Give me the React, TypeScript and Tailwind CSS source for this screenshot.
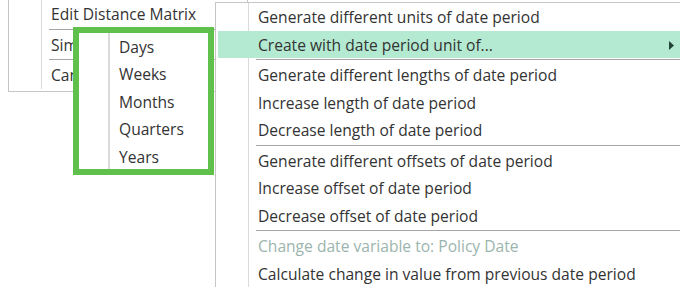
import React from "react";

type Entry = { label: string; disabled?: boolean; active?: boolean; sub?: boolean } | "sep";

const bigMenu: Entry[] = [
  { label: "Generate different units of date period" },
  { label: "Create with date period unit of...", active: true, sub: true },
  "sep",
  { label: "Generate different lengths of date period" },
  { label: "Increase length of date period" },
  { label: "Decrease length of date period" },
  "sep",
  { label: "Generate different offsets of date period" },
  { label: "Increase offset of date period" },
  { label: "Decrease offset of date period" },
  "sep",
  { label: "Change date variable to: Policy Date", disabled: true },
  { label: "Calculate change in value from previous date period" },
];

const leftMenu: Entry[] = [
  { label: "Edit Distance Matrix" },
  "sep",
  { label: "Simulate" },
  "sep",
  { label: "Cancel" },
];

const units = ["Days", "Weeks", "Months", "Quarters", "Years"];

// thin vertical line separating the icon column from the labels
const gutter =
  "bg-[linear-gradient(to_right,transparent_32px,#dadada_32px,#dadada_33px,transparent_33px)]";

const MenuRows = ({ items }: { items: Entry[] }) => (
  <>
    {items.map((it, i) =>
      it === "sep" ? (
        <div key={i} className="h-[3px] pt-[1px]">
          <div className="ml-[38px] h-[1px] bg-[#a6a6a6]" />
        </div>
      ) : (
        <div
          key={i}
          className={`flex h-[27.5px] items-center pl-[40px] pr-2 pt-[2px] whitespace-nowrap ${
            it.active ? "bg-[#b3ead1]" : ""
          } ${it.disabled ? "text-[#9bb5ae]" : "text-[#333]"}`}
        >
          <span className="flex-1">{it.label}</span>
          {it.sub && (
            <svg width="5" height="9" viewBox="0 0 5 9" className="mr-[1px]">
              <path d="M0 0 L5 4.5 L0 9 Z" fill="#24443a" />
            </svg>
          )}
        </div>
      )
    )}
  </>
);

export default function App() {
  return (
    <div
      className="relative h-[289px] w-[680px] overflow-hidden bg-white text-[15.6px]"
      style={{ fontFamily: '"Open Sans", "Noto Sans", sans-serif' }}
    >
      {/* background context menu */}
      <div className="absolute left-[8px] top-[-3px] w-[240px] border border-[#c6c6c6] bg-white p-[2px]">
        <div className={`${gutter} -ml-[2px] pl-[2px]`}>
          <MenuRows items={leftMenu} />
        </div>
      </div>

      {/* main context menu */}
      <div className="absolute left-[215px] top-[2px] w-[470px] border-l border-t border-[#c6c6c6] bg-white px-[2px]">
        <div className={`${gutter} -ml-[2px] pl-[2px]`}>
          <MenuRows items={bigMenu} />
        </div>
      </div>

      {/* highlighted submenu */}
      <div className="absolute left-[73px] top-[27px] h-[148px] w-[141px] overflow-hidden border-[6px] border-[#5fc14c] bg-white">
        <div className="h-full bg-[linear-gradient(to_right,transparent_29px,#dadada_29px,#dadada_31px,transparent_31px)]">
          {units.map((u) => (
            <div key={u} className="flex h-[27.5px] items-center pl-[40px] pt-[1px] text-[#333]">
              {u}
            </div>
          ))}
        </div>
      </div>
    </div>
  );
}
